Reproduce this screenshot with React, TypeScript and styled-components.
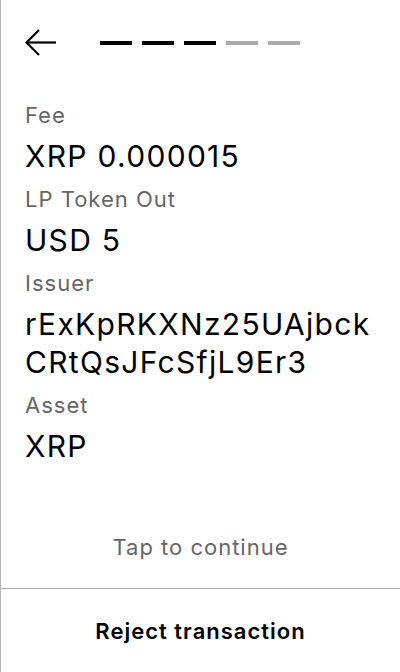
import React from 'react';
import styled, { createGlobalStyle } from 'styled-components';

const GlobalStyle = createGlobalStyle`
  html, body {
    margin: 0;
    padding: 0;
    background: #ffffff;
  }
  body {
    font-family: Inter, "Noto Sans", sans-serif;
    color: #000;
  }
`;

const Screen = styled.div`
  width: 400px;
  height: 672px;
  box-sizing: border-box;
  border-left: 1px solid #b4b4b4;
  display: flex;
  flex-direction: column;
  background: #fff;
`;

const Header = styled.header`
  display: flex;
  align-items: center;
  height: 86px;
  padding: 0 24px;
  gap: 43px;
`;

const BackButton = styled.button`
  border: none;
  background: none;
  padding: 0;
  width: 32px;
  height: 28px;
  display: flex;
  cursor: pointer;
`;

const Steps = styled.div`
  display: flex;
  gap: 10px;
`;

const Step = styled.span<{ $done: boolean }>`
  width: 32px;
  height: 4px;
  background: ${(p) => (p.$done ? '#000' : '#aaaaaa')};
`;

const Details = styled.main`
  flex: 1;
  display: flex;
  flex-direction: column;
  padding: 16px 24px 0;
`;

const Field = styled.div`
  display: flex;
  flex-direction: column;
  gap: 9px;
  margin-bottom: 11px;
`;

const Label = styled.div`
  font-size: 22px;
  line-height: 26px;
  letter-spacing: 1px;
  color: #666;
`;

const Value = styled.div`
  font-size: 30px;
  line-height: 38px;
  letter-spacing: 1.3px;
  color: #000;
  word-break: break-all;
`;

const Hint = styled.div`
  margin-top: auto;
  padding-bottom: 28px;
  text-align: center;
  font-size: 22px;
  line-height: 26px;
  letter-spacing: 1px;
  color: #666;
`;

const RejectButton = styled.button`
  height: 84px;
  border: none;
  border-top: 1px solid #aaaaaa;
  background: #fff;
  font-family: Inter, "Noto Sans", sans-serif;
  font-size: 22px;
  font-weight: 600;
  letter-spacing: 1px;
  color: #000;
  cursor: pointer;
`;

const BackArrow = () => (
  <svg width="32" height="28" viewBox="0 0 32 28" fill="none">
    <path d="M31 13.5H2" stroke="#000" strokeWidth="2.2" />
    <path d="M14 1L1.5 13.5L14 26" stroke="#000" strokeWidth="2.2" />
  </svg>
);

const fields = [
  { label: 'Fee', value: 'XRP 0.000015' },
  { label: 'LP Token Out', value: 'USD 5' },
  { label: 'Issuer', value: 'rExKpRKXNz25UAjbckCRtQsJFcSfjL9Er3' },
  { label: 'Asset', value: 'XRP' },
];

export default function App() {
  const steps = [true, true, true, false, false];
  return (
    <>
      <GlobalStyle />
      <Screen>
        <Header>
          <BackButton aria-label="Back">
            <BackArrow />
          </BackButton>
          <Steps>
            {steps.map((done, i) => (
              <Step key={i} $done={done} />
            ))}
          </Steps>
        </Header>
        <Details>
          {fields.map((f) => (
            <Field key={f.label}>
              <Label>{f.label}</Label>
              <Value>{f.value}</Value>
            </Field>
          ))}
          <Hint>Tap to continue</Hint>
        </Details>
        <RejectButton>Reject transaction</RejectButton>
      </Screen>
    </>
  );
}
